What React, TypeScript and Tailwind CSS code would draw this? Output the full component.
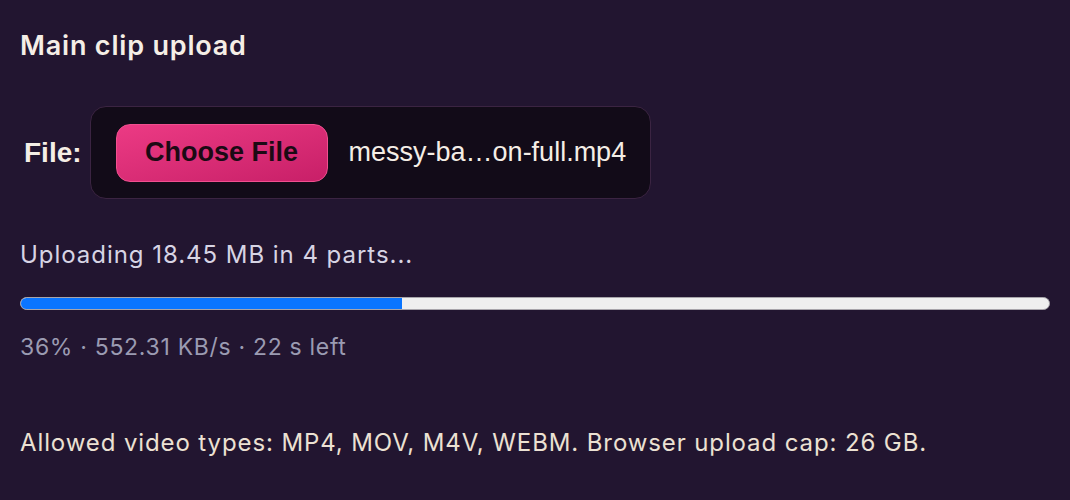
export default function App() {
  const percent = 36;
  const fill = 37.1;

  return (
    <div className="min-h-[500px] w-full bg-[#221530] px-5 pt-[26px] font-['Inter',sans-serif]">
      <h2 className="text-[27px] font-semibold leading-[40px] tracking-[0.03em] text-[#f5eee6]">
        Main clip upload
      </h2>

      <div className="mt-[40px] flex items-center gap-2">
        <span className="pl-1 font-['Liberation_Sans',Arial,sans-serif] text-[28px] font-bold text-[#f5eee6]">
          File:
        </span>
        <div className="flex h-[93px] w-[561px] items-center gap-[21px] rounded-2xl border border-[#3b2442] bg-[#120b18] pl-[25px]">
          <button className="h-[58px] w-[212px] rounded-[14px] border border-[#f0508f] bg-gradient-to-br from-[#ec3a84] to-[#c81f68] font-['Liberation_Sans',Arial,sans-serif] text-[27px] font-bold text-[#1b0a14]">
            Choose File
          </button>
          <span className="font-['Liberation_Sans',Arial,sans-serif] text-[27px] text-[#f5eee6]">
            messy-ba…on-full.mp4
          </span>
        </div>
      </div>

      <p className="mt-[40px] text-[24px] leading-[32px] tracking-[0.04em] text-[#d7d4e4]">
        Uploading 18.45 MB in 4 parts...
      </p>

      <div className="mt-[26px] h-[13px] w-full overflow-hidden rounded-full border border-[#a8a5ab] bg-[#efefef]">
        <div
          className="h-full bg-[#0a75ff]"
          style={{ width: `${fill}%` }}
        />
      </div>

      <p className="mt-[22px] text-[23px] leading-[30px] tracking-[0.03em] text-[#9b9bb2]">
        {percent}% · 552.31 KB/s · 22 s left
      </p>

      <p className="mt-[65px] text-[24px] leading-[32px] tracking-[0.037em] text-[#ece1d3]">
        Allowed video types: MP4, MOV, M4V, WEBM. Browser upload cap: 26 GB.
      </p>
    </div>
  );
}
